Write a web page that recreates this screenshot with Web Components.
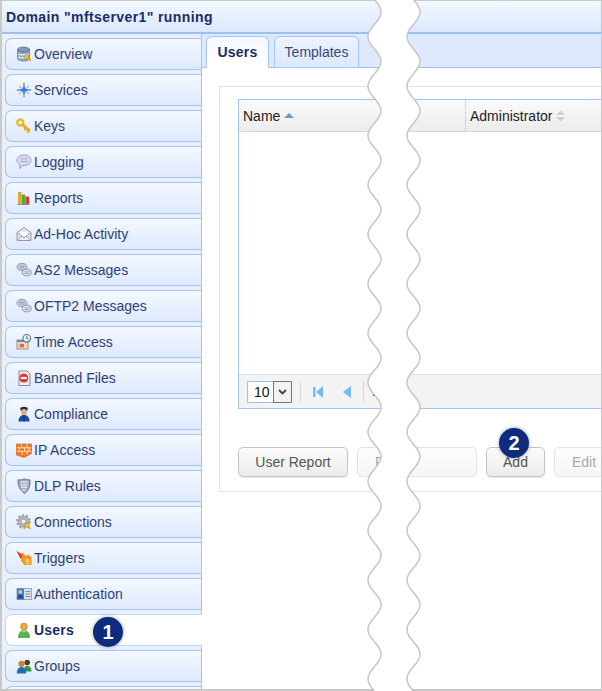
<!DOCTYPE html>
<html>
<head>
<meta charset="utf-8">
<style>
  html, body { margin: 0; padding: 0; background: #fff; }
  body { font-family: "Liberation Sans", Arial, sans-serif; width: 602px; height: 691px; overflow: hidden; position: relative; }
</style>
</head>
<body>
<admin-window>
  <nav-item slot="nav" icon="overview">Overview</nav-item>
  <nav-item slot="nav" icon="services">Services</nav-item>
  <nav-item slot="nav" icon="keys">Keys</nav-item>
  <nav-item slot="nav" icon="logging">Logging</nav-item>
  <nav-item slot="nav" icon="reports">Reports</nav-item>
  <nav-item slot="nav" icon="adhoc">Ad-Hoc Activity</nav-item>
  <nav-item slot="nav" icon="messages">AS2 Messages</nav-item>
  <nav-item slot="nav" icon="messages">OFTP2 Messages</nav-item>
  <nav-item slot="nav" icon="time">Time Access</nav-item>
  <nav-item slot="nav" icon="banned">Banned Files</nav-item>
  <nav-item slot="nav" icon="compliance">Compliance</nav-item>
  <nav-item slot="nav" icon="ip">IP Access</nav-item>
  <nav-item slot="nav" icon="dlp">DLP Rules</nav-item>
  <nav-item slot="nav" icon="connections">Connections</nav-item>
  <nav-item slot="nav" icon="triggers">Triggers</nav-item>
  <nav-item slot="nav" icon="auth">Authentication</nav-item>
  <nav-item slot="nav" icon="users" active>Users</nav-item>
  <nav-item slot="nav" icon="groups">Groups</nav-item>
  <nav-item slot="nav"></nav-item>
  <users-panel slot="main"></users-panel>
</admin-window>
<step-badge style="left:93px;top:617px">1</step-badge>
<step-badge style="left:499px;top:428px">2</step-badge>
<torn-edge></torn-edge>

<script>
const ICONS = {
  overview: `<ellipse cx="7.500" cy="3.500" rx="6" ry="2.500" fill="#8397bd" stroke="#56688c" stroke-width=".7"/><path d="M1.500 3.500v9c0 1.300 2.700 2.500 6 2.500s6-1.200 6-2.500v-9c0 1.300-2.700 2.500-6 2.500s-6-1.200-6-2.500z" fill="#93a5c4" stroke="#56688c" stroke-width=".7"/><path d="M2 8c1.500 1.100 9.500 1.100 11 0M2 11c1.500 1.100 9.500 1.100 11 0" fill="none" stroke="#e6ebf4" stroke-width="1.100"/><circle cx="10.800" cy="10.800" r="2.300" fill="#f4c22c" stroke="#a9801a" stroke-width=".5"/><path d="M11.800 12l3 2.800" stroke="#dca81f" stroke-width="2"/>`,
  services: `<path d="M8 .8v14.400M.8 8h14.400" stroke="#9aa3b2" stroke-width="1.800"/><path d="M3 4l10 8M13 4L3 12" stroke="#b9bfca" stroke-width="1.500"/><path d="M8 3.500l1.400 3.100 3.100 1.400-3.100 1.400L8 12.500 6.600 9.400 3.500 8l3.100-1.400z" fill="#2485ea"/>`,
  keys: `<circle cx="4.300" cy="4.500" r="3" fill="none" stroke="#edbb28" stroke-width="2.400"/><path d="M6.700 6.700l7.300 6.300M10.200 9.800l-1.600 2.200M13 12.300l-1.600 2.200" stroke="#e5aa18" stroke-width="2.600" fill="none"/>`,
  logging: `<path d="M8 1c4 0 7 2.200 7 5.300S12 11.500 8 11.500l-1 0-3.500 3.200.6-4C2 9.600 1 8.100 1 6.300 1 3.200 4 1 8 1z" fill="#dadaf0" stroke="#a0a0c6"/><path d="M4.500 4.800h7M4.500 7.500h7" stroke="#a5a5ca"/>`,
  reports: `<rect x="2" y="2" width="3.500" height="12" fill="#d9ab35"/><rect x="5.700" y="4.500" width="3.500" height="9.500" fill="#4fa848"/><rect x="9.500" y="6.500" width="3.700" height="7.500" fill="#cf4030"/><path d="M1.500 14.500h12" stroke="#8d8d8d"/>`,
  adhoc: `<path d="M1 6.500L8 1.500l7 5V14.500H1z" fill="#e8ebf3" stroke="#9397a8"/><path d="M3.500 5h9v4L8 11.500 3.500 9z" fill="#fff" stroke="#bfc4d1" stroke-width=".7"/><path d="M1 7l7 4.500L15 7M1 14.500l5-4.700M15 14.500l-5-4.700" fill="none" stroke="#9397a8" stroke-width=".9"/>`,
  messages: `<ellipse cx="6" cy="5" rx="5" ry="3.700" fill="#c4cde2" stroke="#8592ad" stroke-width=".9"/><ellipse cx="10.800" cy="10.500" rx="4.500" ry="3.400" fill="#dbe0ec" stroke="#8592ad" stroke-width=".9"/><path d="M3.300 4.200h5.400M3.300 6h5.400M8.300 9.800h5M8.300 11.500h5" stroke="#8592ad" stroke-width=".7"/>`,
  time: `<rect x="1" y="6" width="11" height="9" fill="#f3dccd" stroke="#87797b" stroke-width=".8"/><path d="M1 6h11v2H1z" fill="#7484a6"/><path d="M3.500 9.800h4.500v3.500H3.500z" fill="#ea6a36"/><circle cx="10.800" cy="4.300" r="3.800" fill="#e3f1ee" stroke="#52757f" stroke-width="1.100"/><path d="M10.800 2.200v2.200l1.600 1" fill="none" stroke="#33565f" stroke-width=".9"/>`,
  banned: `<path d="M3 1h8l3 3v11.500H3z" fill="#eceef2" stroke="#868a94"/><circle cx="7.800" cy="8" r="4.500" fill="#dd3527"/><rect x="4.800" y="6.900" width="6" height="2.200" fill="#fff"/>`,
  compliance: `<ellipse cx="8" cy="3" rx="3.800" ry="2.300" fill="#13346b"/><circle cx="8" cy="6" r="2.900" fill="#e4ab77"/><path d="M2.500 15.500c0-4.300 2.200-6.500 5.500-6.500s5.500 2.200 5.500 6.500z" fill="#1650a6"/><path d="M8 9.300v6" stroke="#0c2b61"/>`,
  ip: `<path d="M.5 2h15v9.500L8 15.500.5 13z" fill="#ee7a28" stroke="#cc5a16" stroke-width=".6"/><path d="M1 5.800h14M1 9.300h14M5.500 2v3.800M11 2v3.800M3.500 5.800v3.500M8.500 5.800v3.500M13 5.800v3.500M6 9.300v3.500M11 9.300v3" stroke="#fde0b0" stroke-width="1" fill="none"/>`,
  dlp: `<path d="M2 1.800c2.300.3 4.400-.1 6.500-1.100 1.700 1 3.300 1.300 5.500 1.100.3 5.800-1 10.500-5.500 13.700C4 12.300 1.800 8 2 1.800z" fill="#a5abc7" stroke="#656b8b" stroke-width=".9"/><path d="M4.500 4.200h7M4.500 6.800h7M5 9.400h6M6 12h4" stroke="#eceef5" stroke-width="1.200"/>`,
  connections: `<circle cx="7.500" cy="7.500" r="5.300" fill="#b5b5ba" stroke="#85858c" stroke-width=".7"/><circle cx="7.500" cy="7.500" r="6.400" fill="none" stroke="#9a9aa0" stroke-width="1.800" stroke-dasharray="2 2"/><circle cx="7.500" cy="7.500" r="2.300" fill="#f2f3f6" stroke="#8c8c92" stroke-width=".6"/><circle cx="11" cy="11.300" r="2.300" fill="#f4c22c" stroke="#a27a18" stroke-width=".5"/><path d="M12 12.500l2.500 2.300" stroke="#dca81f" stroke-width="1.800"/>`,
  triggers: `<path d="M.5 1l5 3 1-1.800 3.500 4 2-1.700 3.500 2.500v8H8.500L4.500 10l1.500-.5z" fill="#f29420"/><path d="M.5 1l5 3 .8 3.500-1.800 1.300z" fill="#e23f28"/><path d="M9 8.500l4.500.5v5.500H10z" fill="#fcc958"/>`,
  auth: `<rect x="1" y="2.500" width="14.500" height="11" fill="#dbe2ec" stroke="#8896a8" stroke-width=".8"/><rect x="1" y="2.500" width="7" height="11" fill="#3484d4"/><circle cx="4.300" cy="6" r="1.900" fill="#f0bf88"/><path d="M1.500 12.500c0-2.800 1.200-4 2.800-4s2.900 1.200 2.900 4z" fill="#154fa3"/><path d="M9.500 5.500h4.800M9.500 8h4.800M9.500 10.500h4.800" stroke="#838fa0"/>`,
  users: `<circle cx="8" cy="4.500" r="3.500" fill="#eaa843" stroke="#bf7d24" stroke-width=".6"/><path d="M2.500 15.500c0-4.300 2.200-7 5.500-7s5.500 2.700 5.500 7z" fill="#4fb847" stroke="#378b32" stroke-width=".6"/><path d="M5.800 8.600L8 10.700l2.200-2.100" fill="#f5cd90"/>`,
  groups: `<circle cx="11.200" cy="4.500" r="2.800" fill="#4f3e27"/><path d="M7.500 13.500c0-3.700 1.500-5.800 3.700-5.800s4.300 2.100 4.300 5.800z" fill="#36983a"/><circle cx="5.500" cy="5.800" r="3.100" fill="#d08238"/><path d="M.8 15.500c0-4.300 2-6.500 4.700-6.500s4.700 2.200 4.700 6.500z" fill="#2469c0"/>`
};

class AdminWindow extends HTMLElement {
  constructor() {
    super();
    this.attachShadow({ mode: "open" });
  }
  connectedCallback() {
    this.shadowRoot.innerHTML = `
      <style>
        :host {
          display: grid;
          grid-template-columns: 200px 1fr;
          grid-template-rows: 33px 1fr;
          box-sizing: border-box;
          width: 602px;
          height: 691px;
          border: solid #c9c9c9;
          border-width: 1px 1px 2px 2px;
          overflow: hidden;
        }
        header {
          grid-column: 1 / 3;
          box-sizing: border-box;
          height: 33px;
          padding: 0 4px;
          display: flex;
          align-items: center;
          font-weight: bold;
          font-size: 14px;
          letter-spacing: .4px;
          color: #1b2c66;
          background: linear-gradient(#f1f7ff, #dbe8fd);
          border-bottom: 2px solid #9fbfee;
        }
        .nav {
          display: flex;
          flex-direction: column;
          gap: 4px;
          box-sizing: border-box;
          padding: 4px 0 0 3px;
          background: #e9f0fd;
          border-right: 1px solid #a6c4f1;
          height: 656px;
        }
        .main { min-width: 0; overflow: hidden; }
      </style>
      <header>Domain "mftserver1" running</header>
      <div class="nav"><slot name="nav"></slot></div>
      <div class="main"><slot name="main"></slot></div>
    `;
  }
}
customElements.define("admin-window", AdminWindow);

class NavItem extends HTMLElement {
  constructor() {
    super();
    this.attachShadow({ mode: "open" });
  }
  connectedCallback() {
    const icon = ICONS[this.getAttribute("icon")] || "";
    this.shadowRoot.innerHTML = `
      <style>
        :host {
          display: flex;
          flex: none;
          align-items: center;
          box-sizing: border-box;
          height: 32px;
          padding-left: 10px;
          gap: 2px;
          font-size: 14px;
          color: #2e3f75;
          background: linear-gradient(#f4f8ff, #dee9fd);
          border: 1px solid #a6c4f1;
          border-right: 0;
          border-radius: 7px 0 0 7px;
        }
        :host([active]) {
          background: #fff;
          border-color: #c2d7f5;
          margin-right: -1px;
          font-weight: bold;
          color: #1b2c66;
          letter-spacing: .2px;
        }
        svg { width: 16px; height: 16px; flex: none; }
      </style>
      ${icon ? `<svg viewBox="0 0 16 16">${icon}</svg>` : ""}
      <slot></slot>
    `;
  }
}
customElements.define("nav-item", NavItem);

class TabStrip extends HTMLElement {
  constructor() {
    super();
    this.attachShadow({ mode: "open" });
  }
  connectedCallback() {
    this.shadowRoot.innerHTML = `
      <style>
        :host {
          display: flex;
          align-items: flex-end;
          gap: 5px;
          box-sizing: border-box;
          height: 34px;
          padding-left: 4px;
          background: #dce9fe;
          border-bottom: 1px solid #9fbfee;
        }
        .tab {
          box-sizing: border-box;
          height: 32px;
          margin-bottom: -1px;
          display: flex;
          align-items: center;
          justify-content: center;
          font-size: 14px;
          border: 1px solid #a6c4f1;
          border-radius: 6px 6px 0 0;
        }
        .on {
          width: 63px;
          font-weight: bold;
          color: #1b2c66;
          letter-spacing: .2px;
          background: linear-gradient(#f3f7ff, #fff 70%);
          border-bottom-color: #fff;
        }
        .off {
          width: 85px;
          color: #3a4a78;
          background: linear-gradient(#eef4ff, #dce8fd);
        }
      </style>
      <div class="tab on">Users</div>
      <div class="tab off">Templates</div>
    `;
  }
}
customElements.define("tab-strip", TabStrip);

class PushButton extends HTMLElement {
  constructor() {
    super();
    this.attachShadow({ mode: "open" });
  }
  connectedCallback() {
    this.shadowRoot.innerHTML = `
      <style>
        :host {
          display: flex;
          flex: none;
          align-items: center;
          justify-content: center;
          box-sizing: border-box;
          height: 30px;
          font-size: 14px;
          color: #555;
          background: linear-gradient(#fbfbfb, #ececec);
          border: 1px solid #c4c4c4;
          border-radius: 5px;
          box-shadow: 0 1px 1px rgba(0,0,0,.08);
        }
        :host([disabled]) {
          color: #aaa;
          background: linear-gradient(#fdfdfd, #f6f6f6);
          border-color: #e2e2e2;
          box-shadow: none;
        }
      </style>
      <slot></slot>
    `;
  }
}
customElements.define("push-button", PushButton);

class UsersTable extends HTMLElement {
  constructor() {
    super();
    this.attachShadow({ mode: "open" });
  }
  connectedCallback() {
    this.shadowRoot.innerHTML = `
      <style>
        :host {
          display: flex;
          flex-direction: column;
          box-sizing: border-box;
          height: 310px;
          width: 500px;
          background: #fff;
          border: 1px solid #a6c4f1;
          border-right: 0;
          font-size: 14px;
          color: #222;
        }
        .head {
          display: grid;
          grid-template-columns: 226px 1fr;
          height: 32px;
          flex: none;
          box-sizing: border-box;
          background: linear-gradient(#fafafa, #ececec);
          border-bottom: 1px solid #d9d9d9;
        }
        .col { display: flex; align-items: center; gap: 4px; padding-left: 4px; }
        .col + .col { border-left: 1px dotted #bdbdbd; }
        .body { flex: 1; }
        .pager {
          flex: none;
          height: 34px;
          box-sizing: border-box;
          display: flex;
          align-items: center;
          padding-left: 8px;
          background: #f3f3f3;
          border-top: 1px solid #dcdcdc;
        }
        .select {
          display: flex;
          box-sizing: border-box;
          width: 45px;
          height: 22px;
          background: #fff;
          border: 1px solid #9fbfee;
          font-size: 14px;
          color: #111;
        }
        .select span { flex: 1; padding-left: 6px; line-height: 21px; }
        .select i {
          width: 17px;
          margin: -1px;
          display: flex;
          align-items: center;
          justify-content: center;
          border: 1px solid #777;
          background: #f2f2f2;
        }
        .sep { width: 1px; height: 22px; background: #d6d6d6; }
        svg { display: block; flex: none; }
      </style>
      <div class="head">
        <div class="col">Name
          <svg width="10" height="5" viewBox="0 0 10 5"><path d="M0 5L5 0l5 5z" fill="#6d97d0"/></svg>
        </div>
        <div class="col">Administrator
          <svg width="9" height="12" viewBox="0 0 9 12"><path d="M0 5l4.500-4.500L9 5zM0 7l4.500 4.500L9 7z" fill="#cfcfcf"/></svg>
        </div>
      </div>
      <div class="body"></div>
      <div class="pager">
        <div class="select"><span>10</span><i><svg width="9" height="6" viewBox="0 0 9 6"><path d="M1 1l3.500 3.500L8 1" fill="none" stroke="#444" stroke-width="1.800"/></svg></i></div>
        <div class="sep" style="margin-left:8px"></div>
        <svg style="margin-left:12px" width="10" height="12" viewBox="0 0 10 12"><path d="M0 1h2.500v10H0zM10 0v12L3 6z" fill="#74bcee"/></svg>
        <svg style="margin-left:20px" width="8" height="12" viewBox="0 0 8 12"><path d="M8 0v12L0 6z" fill="#74bcee"/></svg>
        <div class="sep" style="margin-left:12px"></div>
        <span style="margin-left:8px;font-size:13px">P</span>
      </div>
    `;
  }
}
customElements.define("users-table", UsersTable);

class UsersPanel extends HTMLElement {
  constructor() {
    super();
    this.attachShadow({ mode: "open" });
  }
  connectedCallback() {
    this.shadowRoot.innerHTML = `
      <style>
        :host { display: block; height: 100%; background: #fff; }
        .box {
          box-sizing: border-box;
          width: 500px;
          height: 406px;
          margin: 18px 0 0 17px;
          padding: 12px 0 0 18px;
          border: 1px solid #e2e2e2;
          border-right: 0;
        }
        .actions {
          display: flex;
          margin-top: 38px;
          gap: 9px;
        }
      </style>
      <tab-strip></tab-strip>
      <div class="box">
        <users-table></users-table>
        <div class="actions">
          <push-button style="width:110px">User Report</push-button>
          <push-button disabled style="width:120px;justify-content:flex-start;padding-left:17px">F</push-button>
          <push-button style="width:59px">Add</push-button>
          <push-button disabled style="width:60px">Edit</push-button>
        </div>
      </div>
    `;
  }
}
customElements.define("users-panel", UsersPanel);

class StepBadge extends HTMLElement {
  constructor() {
    super();
    this.attachShadow({ mode: "open" });
  }
  connectedCallback() {
    this.shadowRoot.innerHTML = `
      <style>
        :host {
          position: absolute;
          display: flex;
          align-items: center;
          justify-content: center;
          width: 30px;
          height: 30px;
          border-radius: 50%;
          background: #0e2c7e;
          color: #fff;
          font-size: 20px;
          font-weight: bold;
          box-shadow: 0 0 4px rgba(0,0,0,.35);
        }
      </style>
      <slot></slot>
    `;
  }
}
customElements.define("step-badge", StepBadge);

// white strip with two wavy cut edges over the whole window
class TornEdge extends HTMLElement {
  constructor() {
    super();
    this.attachShadow({ mode: "open" });
  }
  wave(center) {
    const pts = [];
    for (let y = -2; y <= 692; y += 2) {
      const x = center + 6.5 * Math.cos((2 * Math.PI * (y - 12)) / 49.4);
      pts.push(x.toFixed(1) + " " + y);
    }
    return pts;
  }
  connectedCallback() {
    const left = this.wave(374.5);
    const right = this.wave(413.5);
    const fill = "M" + left.join("L") + "L" + [...right].reverse().join("L") + "Z";
    this.shadowRoot.innerHTML = `
      <style>
        :host { position: absolute; left: 0; top: 0; width: 602px; height: 691px; pointer-events: none; }
        svg { display: block; }
      </style>
      <svg width="602" height="691">
        <path d="${fill}" fill="#fff"/>
        <path d="M${left.join("L")}" fill="none" stroke="#c6c6c6" stroke-width="1.5"/>
        <path d="M${right.join("L")}" fill="none" stroke="#c6c6c6" stroke-width="1.5"/>
      </svg>
    `;
  }
}
customElements.define("torn-edge", TornEdge);
</script>
</body>
</html>
